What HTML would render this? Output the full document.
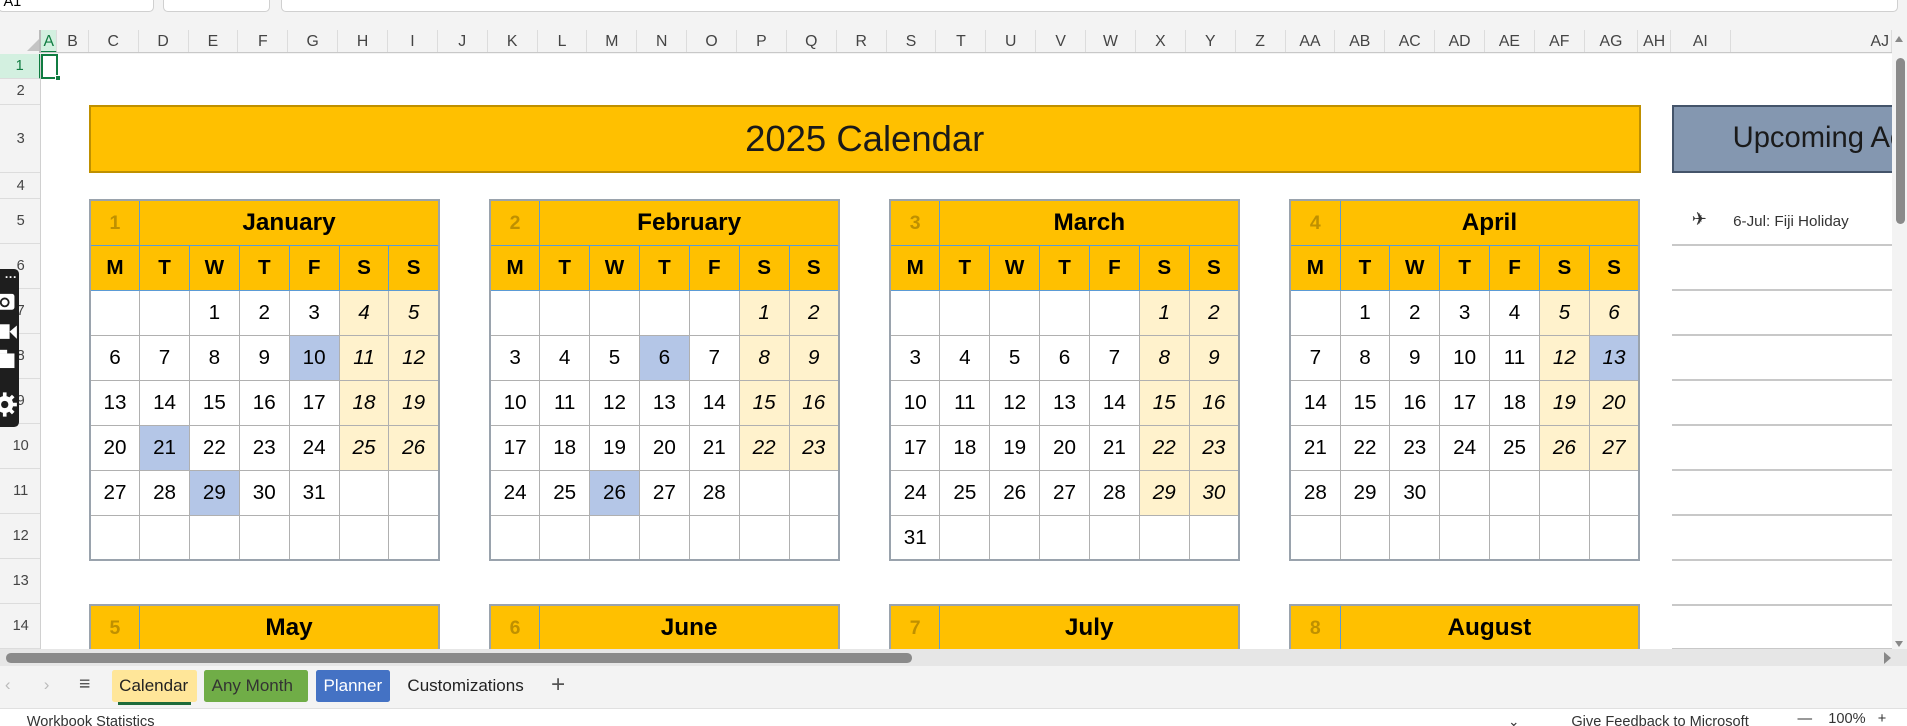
<!DOCTYPE html>
<html><head><meta charset="utf-8">
<style>
*{box-sizing:border-box;margin:0;padding:0}
html,body{width:1907px;height:726px;overflow:hidden;background:#fff}
#pg{zoom:1.21620;width:1568px;height:597px;position:relative;overflow:hidden;font-family:"Liberation Sans",sans-serif;background:#f3f3f3}
.abs{position:absolute}
.colh{position:absolute;top:25px;height:19px;font-size:13px;color:#444;text-align:center;line-height:19px;border-right:1px solid #dcdcdc}
.rowh{position:absolute;left:0;width:34px;font-size:12px;color:#444;text-align:center;border-bottom:1px solid #dcdcdc}
#sheet{position:absolute;left:34px;top:44px;width:1522px;height:490px;background:#fff;overflow:hidden}
table.m{position:absolute;border-collapse:collapse;table-layout:fixed;width:288px;border:2px solid #9aa3ad}
table.m col{width:41px}
table.m td{height:37px;text-align:center;font-size:17px;color:#000;border:1px solid #b0b0b0;padding:0;overflow:hidden;white-space:nowrap}
table.m tr.h td{background:#ffc000;border:1px solid #5b9bd5;font-weight:bold}
table.m tr.h td.n{color:#bf9000;font-size:16px}
table.m tr.h td.t{font-size:20px}
table.m tr.d td{background:#ffc000;border:1px solid #5b9bd5;font-weight:bold;font-size:17px}
table.m td.w{background:#fff2cc;font-style:italic}
table.m td.x{background:#b4c6e7}
table.m td.xi{background:#b4c6e7;font-style:italic}
.rl{position:absolute;left:1341px;width:181px;height:1px;background:#c8c8c8}
.tab{position:absolute;top:551px;height:26px;line-height:26px;font-size:14px;padding:0 6px;border-radius:2px}
</style></head><body><div id="pg">
<div class="abs" style="left:-2px;top:-4px;width:129px;height:14px;background:#fff;border:1px solid #d0d0d0;border-radius:4px;font-size:12px;line-height:10px;padding-left:4px">A1</div>
<div class="abs" style="left:134px;top:-4px;width:88px;height:14px;background:#fff;border:1px solid #d0d0d0;border-radius:4px"></div>
<div class="abs" style="left:231px;top:-4px;width:1330px;height:14px;background:#fff;border:1px solid #d0d0d0;border-radius:4px"></div>
<div class="abs" style="left:0;top:25px;width:34px;height:19px;border-right:2px solid #bbb"></div>
<div class="abs" style="left:22px;top:32px;width:0;height:0;border-left:10px solid transparent;border-bottom:10px solid #c4c4c4"></div>
<div class="colh" style="left:34px;width:13px;background:#d3f0e0;color:#107c41;border-bottom:2px solid #107c41">A</div>
<div class="colh" style="left:47px;width:26px">B</div>
<div class="colh" style="left:73px;width:41px">C</div><div class="colh" style="left:114px;width:41px">D</div><div class="colh" style="left:155px;width:41px">E</div><div class="colh" style="left:196px;width:41px">F</div><div class="colh" style="left:237px;width:41px">G</div><div class="colh" style="left:278px;width:41px">H</div><div class="colh" style="left:319px;width:41px">I</div><div class="colh" style="left:360px;width:41px">J</div><div class="colh" style="left:401px;width:41px">K</div><div class="colh" style="left:442px;width:41px">L</div><div class="colh" style="left:483px;width:41px">M</div><div class="colh" style="left:524px;width:41px">N</div><div class="colh" style="left:565px;width:41px">O</div><div class="colh" style="left:606px;width:41px">P</div><div class="colh" style="left:647px;width:41px">Q</div><div class="colh" style="left:688px;width:41px">R</div><div class="colh" style="left:729px;width:41px">S</div><div class="colh" style="left:770px;width:41px">T</div><div class="colh" style="left:811px;width:41px">U</div><div class="colh" style="left:852px;width:41px">V</div><div class="colh" style="left:893px;width:41px">W</div><div class="colh" style="left:934px;width:41px">X</div><div class="colh" style="left:975px;width:41px">Y</div><div class="colh" style="left:1016px;width:41px">Z</div><div class="colh" style="left:1057px;width:41px">AA</div><div class="colh" style="left:1098px;width:41px">AB</div><div class="colh" style="left:1139px;width:41px">AC</div><div class="colh" style="left:1180px;width:41px">AD</div><div class="colh" style="left:1221px;width:41px">AE</div><div class="colh" style="left:1262px;width:41px">AF</div><div class="colh" style="left:1303px;width:44px">AG</div><div class="colh" style="left:1347px;width:27px">AH</div><div class="colh" style="left:1374px;width:49px">AI</div><div class="colh" style="left:1423px;width:133px;text-align:right;padding-right:2px">AJ</div>
<div class="abs" style="left:34px;top:43px;width:1522px;height:1px;background:#c8c8c8"></div>
<div class="rowh" style="top:44px;height:21px;line-height:21px;background:#d3f0e0;color:#107c41;border-right:2px solid #107c41">1</div>
<div class="rowh" style="top:65px;height:21px;line-height:21px">2</div>
<div class="rowh" style="top:86px;height:56px;line-height:56px">3</div>
<div class="rowh" style="top:142px;height:22px;line-height:22px">4</div>
<div class="rowh" style="top:164px;height:37px;line-height:37px">5</div>
<div class="rowh" style="top:201px;height:37px;line-height:37px">6</div>
<div class="rowh" style="top:238px;height:37px;line-height:37px">7</div>
<div class="rowh" style="top:275px;height:37px;line-height:37px">8</div>
<div class="rowh" style="top:312px;height:37px;line-height:37px">9</div>
<div class="rowh" style="top:349px;height:37px;line-height:37px">10</div>
<div class="rowh" style="top:386px;height:37px;line-height:37px">11</div>
<div class="rowh" style="top:423px;height:37px;line-height:37px">12</div>
<div class="rowh" style="top:460px;height:37px;line-height:37px">13</div>
<div class="rowh" style="top:497px;height:37px;line-height:37px">14</div>
<div class="abs" style="left:33px;top:44px;width:1px;height:490px;background:#d0d0d0"></div>

<div id="sheet">
<div class="abs" style="left:0;top:0;width:14px;height:21px;border:2px solid #107c41"></div>
<div class="abs" style="left:11px;top:18px;width:5px;height:5px;background:#107c41;border:1px solid #fff"></div>
<div class="abs" style="left:39px;top:42px;width:1276px;height:56px;background:#ffc000;border:2px solid #bf9000;text-align:center;font-size:30px;line-height:52px;color:#1a1a1a">2025 Calendar</div>
<div class="abs" style="left:1341px;top:42px;width:200px;height:56px;background:#8497b0;border:2px solid #44546a;font-size:24px;line-height:52px;color:#1a1a1a;padding-left:48px;white-space:nowrap">Upcoming Ac</div>
<div class="abs" style="left:1357px;top:127px;font-size:15px;color:#333">&#9992;</div>
<div class="abs" style="left:1391px;top:131px;font-size:12.5px;color:#333">6-Jul: Fiji Holiday</div>
<div class="rl" style="top:157px"></div><div class="rl" style="top:194px"></div><div class="rl" style="top:231px"></div><div class="rl" style="top:268px"></div><div class="rl" style="top:305px"></div><div class="rl" style="top:342px"></div><div class="rl" style="top:379px"></div><div class="rl" style="top:416px"></div><div class="rl" style="top:453px"></div><div class="rl" style="top:489px"></div>

<table class="m" style="left:39px;top:120px"><colgroup><col><col><col><col><col><col><col></colgroup>
<tr class="h"><td class="n">1</td><td class="t" colspan="6">January</td></tr>
<tr class="d"><td>M</td><td>T</td><td>W</td><td>T</td><td>F</td><td>S</td><td>S</td></tr>
<tr><td></td><td></td><td>1</td><td>2</td><td>3</td><td class="w">4</td><td class="w">5</td></tr>
<tr><td>6</td><td>7</td><td>8</td><td>9</td><td class="x">10</td><td class="w">11</td><td class="w">12</td></tr>
<tr><td>13</td><td>14</td><td>15</td><td>16</td><td>17</td><td class="w">18</td><td class="w">19</td></tr>
<tr><td>20</td><td class="x">21</td><td>22</td><td>23</td><td>24</td><td class="w">25</td><td class="w">26</td></tr>
<tr><td>27</td><td>28</td><td class="x">29</td><td>30</td><td>31</td><td></td><td></td></tr>
<tr><td></td><td></td><td></td><td></td><td></td><td></td><td></td></tr>
</table>
<table class="m" style="left:368px;top:120px"><colgroup><col><col><col><col><col><col><col></colgroup>
<tr class="h"><td class="n">2</td><td class="t" colspan="6">February</td></tr>
<tr class="d"><td>M</td><td>T</td><td>W</td><td>T</td><td>F</td><td>S</td><td>S</td></tr>
<tr><td></td><td></td><td></td><td></td><td></td><td class="w">1</td><td class="w">2</td></tr>
<tr><td>3</td><td>4</td><td>5</td><td class="x">6</td><td>7</td><td class="w">8</td><td class="w">9</td></tr>
<tr><td>10</td><td>11</td><td>12</td><td>13</td><td>14</td><td class="w">15</td><td class="w">16</td></tr>
<tr><td>17</td><td>18</td><td>19</td><td>20</td><td>21</td><td class="w">22</td><td class="w">23</td></tr>
<tr><td>24</td><td>25</td><td class="x">26</td><td>27</td><td>28</td><td></td><td></td></tr>
<tr><td></td><td></td><td></td><td></td><td></td><td></td><td></td></tr>
</table>
<table class="m" style="left:697px;top:120px"><colgroup><col><col><col><col><col><col><col></colgroup>
<tr class="h"><td class="n">3</td><td class="t" colspan="6">March</td></tr>
<tr class="d"><td>M</td><td>T</td><td>W</td><td>T</td><td>F</td><td>S</td><td>S</td></tr>
<tr><td></td><td></td><td></td><td></td><td></td><td class="w">1</td><td class="w">2</td></tr>
<tr><td>3</td><td>4</td><td>5</td><td>6</td><td>7</td><td class="w">8</td><td class="w">9</td></tr>
<tr><td>10</td><td>11</td><td>12</td><td>13</td><td>14</td><td class="w">15</td><td class="w">16</td></tr>
<tr><td>17</td><td>18</td><td>19</td><td>20</td><td>21</td><td class="w">22</td><td class="w">23</td></tr>
<tr><td>24</td><td>25</td><td>26</td><td>27</td><td>28</td><td class="w">29</td><td class="w">30</td></tr>
<tr><td>31</td><td></td><td></td><td></td><td></td><td></td><td></td></tr>
</table>
<table class="m" style="left:1026px;top:120px"><colgroup><col><col><col><col><col><col><col></colgroup>
<tr class="h"><td class="n">4</td><td class="t" colspan="6">April</td></tr>
<tr class="d"><td>M</td><td>T</td><td>W</td><td>T</td><td>F</td><td>S</td><td>S</td></tr>
<tr><td></td><td>1</td><td>2</td><td>3</td><td>4</td><td class="w">5</td><td class="w">6</td></tr>
<tr><td>7</td><td>8</td><td>9</td><td>10</td><td>11</td><td class="w">12</td><td class="xi">13</td></tr>
<tr><td>14</td><td>15</td><td>16</td><td>17</td><td>18</td><td class="w">19</td><td class="w">20</td></tr>
<tr><td>21</td><td>22</td><td>23</td><td>24</td><td>25</td><td class="w">26</td><td class="w">27</td></tr>
<tr><td>28</td><td>29</td><td>30</td><td></td><td></td><td></td><td></td></tr>
<tr><td></td><td></td><td></td><td></td><td></td><td></td><td></td></tr>
</table>
<table class="m" style="left:39px;top:453px"><colgroup><col><col><col><col><col><col><col></colgroup>
<tr class="h"><td class="n">5</td><td class="t" colspan="6">May</td></tr>
<tr class="d"><td>M</td><td>T</td><td>W</td><td>T</td><td>F</td><td>S</td><td>S</td></tr></table>
<table class="m" style="left:368px;top:453px"><colgroup><col><col><col><col><col><col><col></colgroup>
<tr class="h"><td class="n">6</td><td class="t" colspan="6">June</td></tr>
<tr class="d"><td>M</td><td>T</td><td>W</td><td>T</td><td>F</td><td>S</td><td>S</td></tr></table>
<table class="m" style="left:697px;top:453px"><colgroup><col><col><col><col><col><col><col></colgroup>
<tr class="h"><td class="n">7</td><td class="t" colspan="6">July</td></tr>
<tr class="d"><td>M</td><td>T</td><td>W</td><td>T</td><td>F</td><td>S</td><td>S</td></tr></table>
<table class="m" style="left:1026px;top:453px"><colgroup><col><col><col><col><col><col><col></colgroup>
<tr class="h"><td class="n">8</td><td class="t" colspan="6">August</td></tr>
<tr class="d"><td>M</td><td>T</td><td>W</td><td>T</td><td>F</td><td>S</td><td>S</td></tr></table>
</div>

<div class="abs" style="left:-4px;top:221px;width:20px;height:130px;background:#1e1e1e;border-radius:4px"></div>
<div class="abs" style="left:4px;top:222px;color:#fff;font-size:10px;font-weight:bold">&middot;&middot;&middot;</div>
<svg class="abs" style="left:-4px;top:238px" width="20" height="110" viewBox="0 0 20 110">
<rect x="0" y="4" width="16" height="13" rx="2" fill="#fff"/><circle cx="8" cy="11" r="4" fill="#1e1e1e"/><circle cx="8" cy="11" r="2.5" fill="#fff"/>
<rect x="0" y="29" width="12" height="12" fill="#fff"/><path d="M12 35 L18 30 L18 41 Z" fill="#fff"/>
<rect x="0" y="53" width="16" height="12" fill="#fff"/><rect x="0" y="50" width="10" height="3" fill="#fff"/>
<circle cx="8" cy="95" r="7" fill="#fff"/>
<g stroke="#fff" stroke-width="3"><path d="M8 85 V105 M-2 95 H18 M1 88 L15 102 M15 88 L1 102"/></g><circle cx="8" cy="95" r="3" fill="#1e1e1e"/>
</svg>

<div class="abs" style="left:1556px;top:25px;width:12px;height:510px;background:#f3f3f3"></div>
<div class="abs" style="left:1559px;top:48px;width:7px;height:136px;background:#8a8a8a;border-radius:4px"></div>
<div class="abs" style="left:1558px;top:30px;width:0;height:0;border-left:4px solid transparent;border-right:4px solid transparent;border-bottom:5px solid #888"></div>
<div class="abs" style="left:1558px;top:527px;width:0;height:0;border-left:4px solid transparent;border-right:4px solid transparent;border-top:5px solid #888"></div>
<div class="abs" style="left:0;top:534px;width:1568px;height:14px;background:#e6e6e6"></div>
<div class="abs" style="left:5px;top:537px;width:745px;height:8px;background:#8a8a8a;border-radius:4px"></div>
<div class="abs" style="left:1549px;top:536px;width:0;height:0;border-top:5px solid transparent;border-bottom:5px solid transparent;border-left:6px solid #888"></div>
<div class="abs" style="left:4px;top:555px;font-size:14px;color:#bbb">&#8249;</div>
<div class="abs" style="left:36px;top:555px;font-size:14px;color:#bbb">&#8250;</div>
<div class="abs" style="left:65px;top:553px;font-size:16px;color:#555">&#8801;</div>
<div class="tab" style="left:92px;width:70px;background:#ffe699;color:#222">Calendar</div>
<div class="abs" style="left:97px;top:577px;width:60px;height:3px;background:#1e6b3a"></div>
<div class="tab" style="left:168px;width:85px;background:#70ad47;color:#333">Any Month</div>
<div class="tab" style="left:260px;width:61px;background:#4472c4;color:#fff">Planner</div>
<div class="tab" style="left:329px;color:#222">Customizations</div>
<div class="abs" style="left:453px;top:552px;font-size:20px;color:#555">+</div>
<div class="abs" style="left:0;top:582px;width:1568px;height:15px;background:#fff;border-top:1px solid #e0e0e0"></div>
<div class="abs" style="left:22px;top:587px;font-size:12px;color:#333">Workbook Statistics</div>
<div class="abs" style="left:1240px;top:587px;font-size:11px;color:#333">&#8964;</div>
<div class="abs" style="left:1292px;top:587px;font-size:12px;color:#333">Give Feedback to Microsoft</div>
<div class="abs" style="left:1478px;top:585px;font-size:12px;color:#333">&#8212;&nbsp;&nbsp;&nbsp;&nbsp;100%&nbsp;&nbsp;&nbsp;+</div>
</div></body></html>
